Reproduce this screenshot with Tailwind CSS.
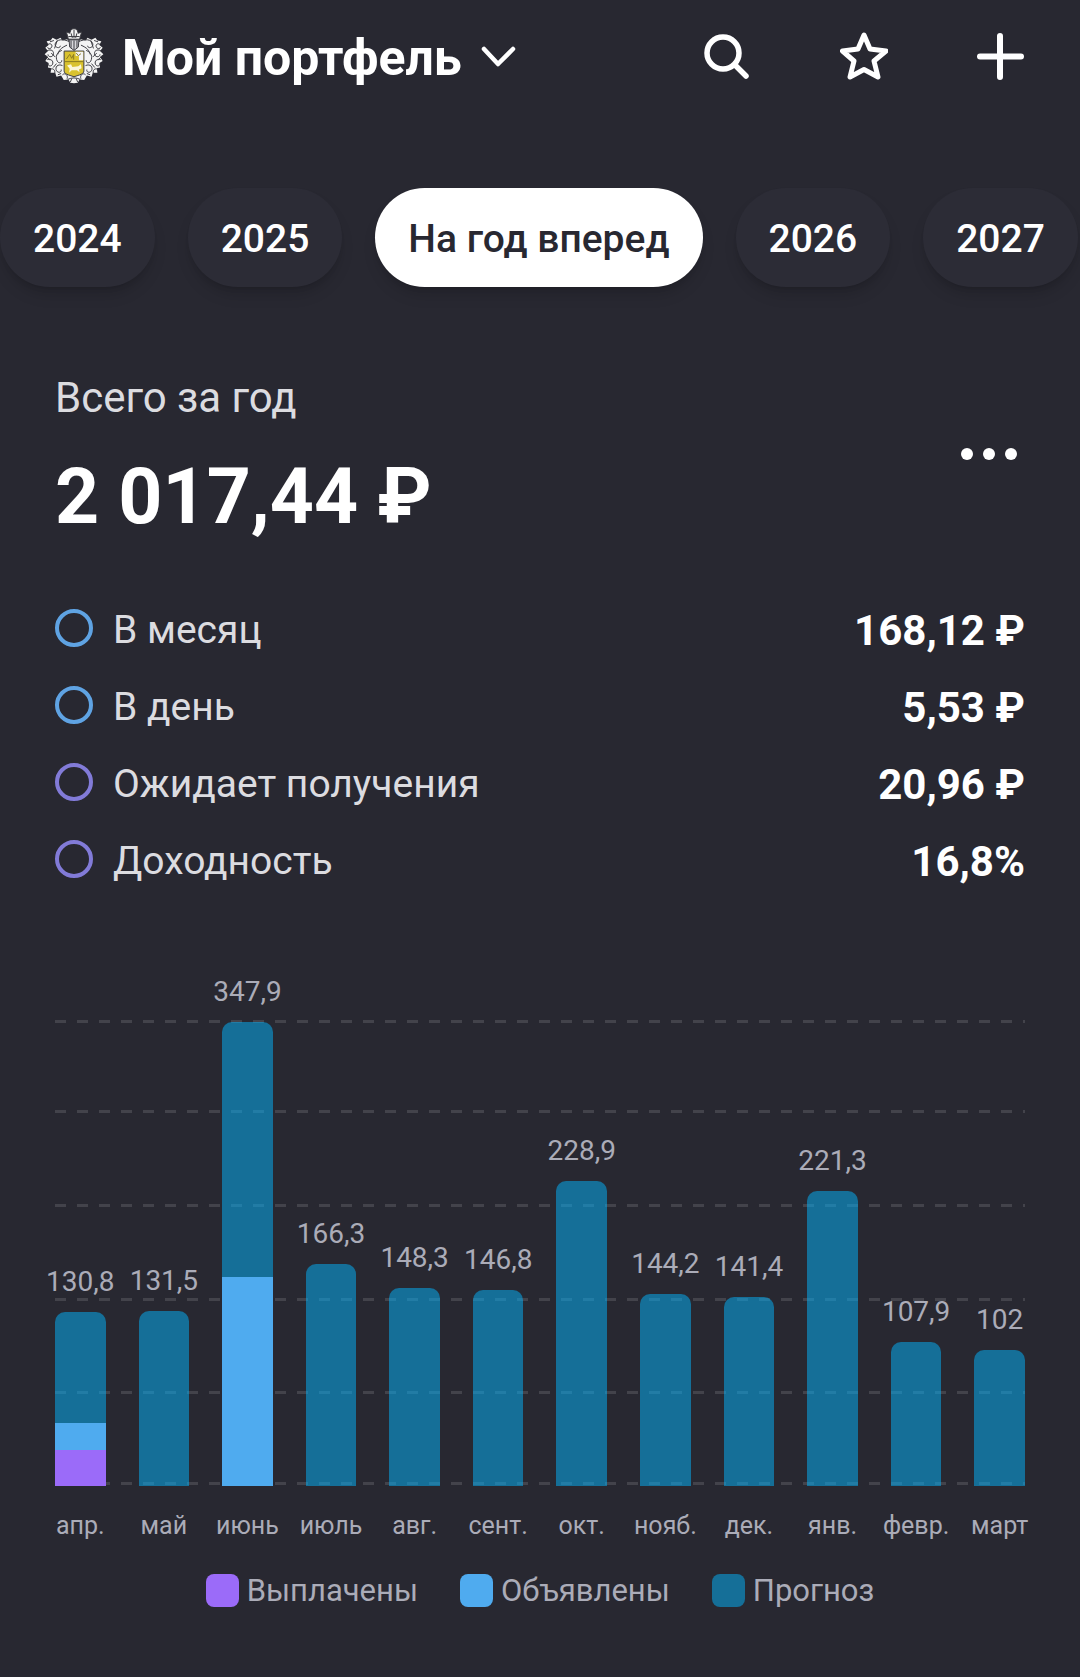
<!DOCTYPE html>
<html lang="ru">
<head>
    <meta charset="UTF-8">
    <meta name="viewport" content="width=device-width, initial-scale=1.0">
    <title>Мой портфель</title>
    <script src="https://cdn.jsdelivr.net/npm/@tailwindcss/browser@4"></script>
</head>
<body class="min-h-screen bg-[#282831] font-['Roboto',sans-serif] text-white">

    <!-- Шапка -->
    <header class="flex items-center justify-between pt-[26px] pl-11 pr-14">
        <button class="flex items-center">
            <svg class="w-[60px] h-[60px] mr-[18px]" viewBox="42 22 182 174" fill="#f4f4f4" stroke="#3c3c42" stroke-width="3" stroke-linejoin="round">
                <path stroke="none" d="M120 66L112 58L98 62L92 54L80 60L68 54L62 62L50 64L56 76L46 84L54 94L44 104L54 112L46 124L56 130L54 144L64 146L62 160L76 160L80 172L94 168L102 182L116 180L122 190L133 192L144 190L150 180L164 182L172 168L186 172L190 160L204 160L202 146L212 144L210 130L220 124L212 112L222 104L212 94L220 84L210 76L216 64L204 62L198 54L186 60L174 54L168 62L154 58L146 66Z"/>
                <path fill="none" d="M120 66C100 56 80 58 76 72C74 84 90 88 92 78M112 76C94 84 86 92 84 104M54 74C62 68 70 76 64 84C58 90 52 86 54 82M50 94C64 86 74 94 70 106C66 114 54 112 54 104"/>
                <path fill="none" d="M96 92C80 98 76 112 82 124C86 132 96 132 96 122M52 120C62 116 72 124 68 134C64 142 54 140 54 132M98 138C84 132 74 142 80 154C86 162 96 158 94 150M62 150C68 144 78 152 74 162M98 166C106 158 116 168 112 178M84 166L94 162M60 66L72 62M82 62L74 86M48 108L60 122M76 112L64 100M70 144L80 132"/>
                <path fill="none" d="M146 66C166 56 186 58 190 72C192 84 176 88 174 78M154 76C172 84 180 92 182 104M212 74C204 68 196 76 202 84C208 90 214 86 212 82M216 94C202 86 192 94 196 106C200 114 212 112 212 104"/>
                <path fill="none" d="M170 92C186 98 190 112 184 124C180 132 170 132 170 122M214 120C204 116 194 124 198 134C202 142 212 140 212 132M168 138C182 132 192 142 186 154C180 162 170 158 172 150M204 150C198 144 188 152 192 162M168 166C160 158 150 168 154 178M182 166L172 162M206 66L194 62M184 62L192 86M218 108L206 122M190 112L202 100M196 144L186 132"/>
                <path d="M116 58L110 36L120 40L124 29L133 25L142 29L146 40L156 36L150 58Z"/>
                <path fill="none" d="M116 50H150M133 28V54M124 40L128 54M142 40L138 54"/>
                <path fill="#d8d8dc" d="M118 60H148L146 82L133 92L120 82Z"/>
                <path fill="none" d="M124 62V84M133 62V90M142 62V84"/>
                <path fill="#d9c22e" d="M103 94H163V154C163 164 150 166 133 172C116 166 103 164 103 154Z"/>
                <path stroke="none" d="M138 96H161V122H148V110L138 108Z"/>
                <path fill="none" stroke="#8a7a20" d="M105 126H161M110 118L120 104L126 116L132 104V120M140 100L146 108L154 102"/>
                <path stroke="none" fill="#fbf6d8" d="M112 138L124 134L128 142L146 140L154 134L156 146L148 150L150 158L142 152L126 152L118 160L120 148Z"/>
                <path fill="none" d="M114 180C126 174 140 174 152 180M122 188L126 178M144 188L140 178"/>
            </svg>
            <span class="text-[50px] leading-[56px] font-bold pt-1">Мой портфель</span>
            <svg class="w-9 h-6 mt-0.5 ml-[18px]" viewBox="0 0 36 24" fill="none" stroke="currentColor" stroke-width="4.5" stroke-linecap="round" stroke-linejoin="round">
                <path d="M4 4L18 19L33 4"></path>
            </svg>
        </button>
        <div class="flex items-center gap-[88px]">
            <button aria-label="Поиск">
                <svg class="w-12 h-12" viewBox="0 0 48 48" fill="none" stroke="currentColor" stroke-width="5.5" stroke-linecap="round">
                    <circle cx="19" cy="21" r="16"></circle>
                    <path d="M31 33L42 44"></path>
                </svg>
            </button>
            <button aria-label="Избранное">
                <svg class="w-12 h-12" viewBox="0 0 48 48" fill="none" stroke="currentColor" stroke-width="5" stroke-linecap="round" stroke-linejoin="round">
                    <path d="M24 3L30 17L46 19L34 29L38 45L24 37.500L10 45L14 29L2.500 19L18 17Z"></path>
                </svg>
            </button>
            <button aria-label="Добавить">
                <svg class="w-12 h-12" viewBox="0 0 48 48" fill="none" stroke="currentColor" stroke-width="6" stroke-linecap="round">
                    <path d="M24 4V45M4 24.500H45"></path>
                </svg>
            </button>
        </div>
    </header>

    <!-- Выбор периода -->
    <nav class="flex gap-[33px] mt-[102px] text-[39px] leading-[95px] font-medium whitespace-nowrap">
        <button class="rounded-full px-[33px] pt-1 bg-[#2c2c36] shadow-lg shadow-black/15">2024</button>
        <button class="rounded-full px-[33px] pt-1 bg-[#2c2c36] shadow-lg shadow-black/15">2025</button>
        <button class="rounded-full px-[33px] pt-1 bg-white text-[#282831] shadow-lg shadow-black/15">На год вперед</button>
        <button class="rounded-full px-[33px] pt-1 bg-[#2c2c36] shadow-lg shadow-black/15">2026</button>
        <button class="rounded-full px-[33px] pt-1 bg-[#2c2c36] shadow-lg shadow-black/15">2027</button>
    </nav>

    <main class="px-[55px] pt-[87px] pb-10">
        <!-- Итог за год -->
        <section class="flex justify-between items-start">
            <div>
                <h2 class="text-[42px] leading-[48px] text-[#dcdce0]">Всего за год</h2>
                <p class="mt-[27px] text-[77px] leading-[96px] font-bold">2 017,44 ₽</p>
            </div>
            <button aria-label="Ещё" class="flex gap-[10px] mt-[74px] mr-2">
                <span class="w-3 h-3 rounded-full bg-white"></span>
                <span class="w-3 h-3 rounded-full bg-white"></span>
                <span class="w-3 h-3 rounded-full bg-white"></span>
            </button>
        </section>

        <!-- Показатели -->
        <dl class="mt-[47px] leading-[77px]">
            <div class="flex items-center">
                <span class="w-[38px] h-[38px] mb-[6px] mr-5 rounded-full border-4 border-[#5fa3e3]"></span>
                <dt class="text-[39px] text-[#dcdce0]">В месяц</dt>
                <dd class="ml-auto text-[42px] font-bold">168,12 ₽</dd>
            </div>
            <div class="flex items-center">
                <span class="w-[38px] h-[38px] mb-[6px] mr-5 rounded-full border-4 border-[#5fa3e3]"></span>
                <dt class="text-[39px] text-[#dcdce0]">В день</dt>
                <dd class="ml-auto text-[42px] font-bold">5,53 ₽</dd>
            </div>
            <div class="flex items-center">
                <span class="w-[38px] h-[38px] mb-[6px] mr-5 rounded-full border-4 border-[#827bd8]"></span>
                <dt class="text-[39px] text-[#dcdce0]">Ожидает получения</dt>
                <dd class="ml-auto text-[42px] font-bold">20,96 ₽</dd>
            </div>
            <div class="flex items-center">
                <span class="w-[38px] h-[38px] mb-[6px] mr-5 rounded-full border-4 border-[#827bd8]"></span>
                <dt class="text-[39px] text-[#dcdce0]">Доходность</dt>
                <dd class="ml-auto text-[42px] font-bold">16,8%</dd>
            </div>
        </dl>

        <!-- График выплат -->
        <section class="mt-[122px] text-[#abacb8]">
            <div class="relative h-[464px]">
                <svg class="absolute inset-0 w-full h-full overflow-visible" stroke="#ffffff" stroke-opacity="0.130" stroke-width="3" stroke-dasharray="11 11">
                    <line x1="0" x2="100%" y1="-0.500" y2="-0.500"></line>
                    <line x1="0" x2="100%" y1="89.500" y2="89.500"></line>
                    <line x1="0" x2="100%" y1="183.500" y2="183.500"></line>
                    <line x1="0" x2="100%" y1="277.500" y2="277.500"></line>
                    <line x1="0" x2="100%" y1="370.500" y2="370.500"></line>
                    <line x1="0" x2="100%" y1="461.500" y2="461.500"></line>
                </svg>
                <div id="bars" class="relative h-full grid grid-cols-12 gap-[33px] text-[28px] leading-[34px]"></div>
            </div>
            <div id="months" class="grid grid-cols-12 gap-[33px] mt-6 text-[25px] leading-8"></div>
        </section>

        <!-- Легенда -->
        <ul class="flex justify-center gap-[42px] mt-8 text-[31px] leading-[33px] text-[#abacb8]">
            <li class="flex items-center gap-2"><span class="w-[33px] h-[33px] rounded-lg bg-[#9b6bf9]"></span>Выплачены</li>
            <li class="flex items-center gap-2"><span class="w-[33px] h-[33px] rounded-lg bg-[#4fabef]"></span>Объявлены</li>
            <li class="flex items-center gap-2"><span class="w-[33px] h-[33px] rounded-lg bg-[#02b6ff]/50"></span>Прогноз</li>
        </ul>
    </main>

    <script>
        const payments = [
            { month: 'апр.', total: 130.8, announced: 20.5, paid: 27 },
            { month: 'май', total: 131.5 },
            { month: 'июнь', total: 347.9, announced: 157 },
            { month: 'июль', total: 166.3 },
            { month: 'авг.', total: 148.3 },
            { month: 'сент.', total: 146.8 },
            { month: 'окт.', total: 228.9 },
            { month: 'нояб.', total: 144.2 },
            { month: 'дек.', total: 141.4 },
            { month: 'янв.', total: 221.3 },
            { month: 'февр.', total: 107.9 },
            { month: 'март', total: 102 }
        ];

        const max = Math.max(...payments.map(p => p.total));
        const bars = document.getElementById('bars');
        const months = document.getElementById('months');

        payments.forEach(p => {
            const announced = p.announced || 0;
            const paid = p.paid || 0;
            const label = p.total.toLocaleString('ru-RU');

            // Столбец: прогноз сверху, под ним объявленные и выплаченные
            bars.innerHTML += `
                <div class="relative self-end flex flex-col min-w-0" style="height: ${p.total / max * 100}%">
                    <span class="absolute bottom-full inset-x-0 mb-[13px] flex justify-center whitespace-nowrap">${label}</span>
                    <div class="rounded-t-[10px] bg-[#02b6ff]/50" style="height: ${(p.total - announced - paid) / p.total * 100}%"></div>
                    <div class="bg-[#4fabef]" style="height: ${announced / p.total * 100}%"></div>
                    <div class="bg-[#9b6bf9]" style="height: ${paid / p.total * 100}%"></div>
                </div>`;
            months.innerHTML += `<span class="flex justify-center min-w-0 whitespace-nowrap">${p.month}</span>`;
        });
    </script>
</body>
</html>
